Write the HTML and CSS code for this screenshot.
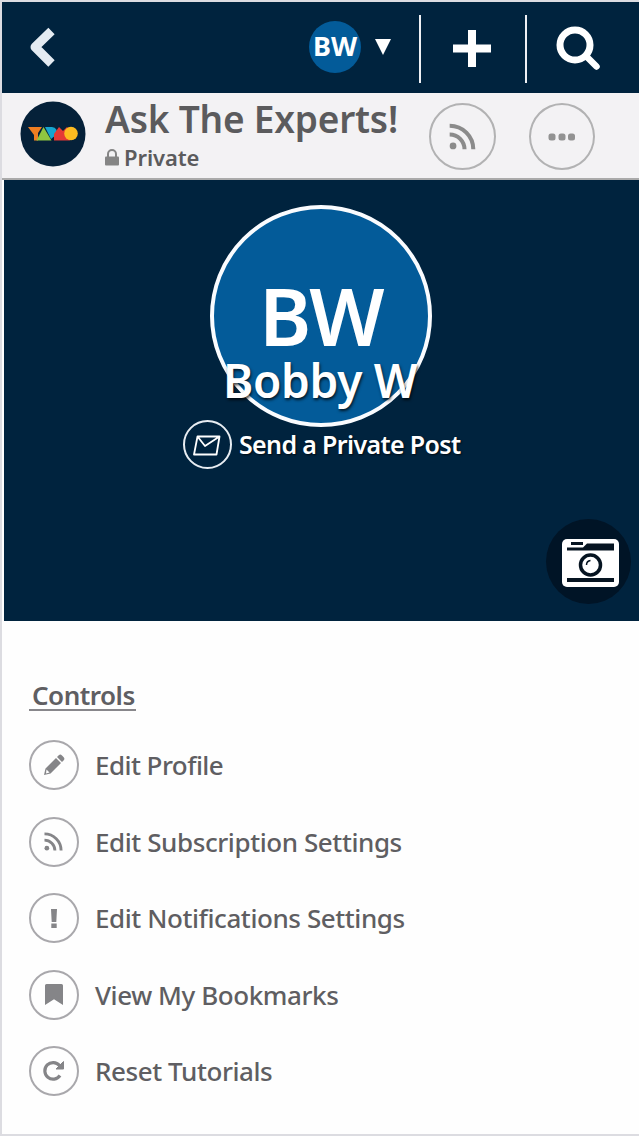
FILE: index.html
```html
<!DOCTYPE html>
<html lang="en">
<head>
<meta charset="utf-8">
<title>Ask The Experts!</title>
<link rel="stylesheet" href="styles.css">
</head>
<body>
<div class="page">
  <header class="topbar">
    <svg class="back" width="30" height="44" viewBox="0 0 30 44"><path d="M23.500 5 7 21l16.500 16.500" fill="none" stroke="#e4ebf2" stroke-width="9" stroke-linejoin="round"/></svg>
    <div class="account">
      <span class="avatar-small"><span>BW</span></span>
      <svg width="16" height="16" viewBox="0 0 16 16"><path d="M0 0h16L8 16z" fill="#fff"/></svg>
    </div>
    <div class="tool tool-add"><svg width="38" height="37" viewBox="0 0 38 37"><path d="M19 0v37M0 18.500h38" stroke="#fff" stroke-width="8"/></svg></div>
    <div class="tool tool-search"><svg width="46" height="46" viewBox="0 0 46 46" fill="none" stroke="#fff"><circle cx="19" cy="19" r="15" stroke-width="7"/><path d="m30 30 10.500 10.500" stroke-width="6.500" stroke-linecap="round"/></svg></div>
  </header>
  <section class="group">
    <svg class="logo" width="66" height="66" viewBox="0 0 66 66"><circle cx="33" cy="33" r="32.500" fill="#052139"/><path d="M8 26h14l-4 6v7.500h-4V34z" fill="#ef7e22"/><path d="M16.500 39.500 23.500 26l8 13.500z" fill="#8fc640"/><path d="M25 26h7a5 5 0 0 1 4 8l-5 4z" fill="#16a5cf"/><path d="M34 39.500V33l5-7 4 4 4-4 3 3v10.500z" fill="#e53935"/><circle cx="51" cy="32.500" r="6.800" fill="#fdbb20"/></svg>
    <div class="group-text">
      <h1>Ask The Experts!</h1>
      <p class="privacy"><svg width="14" height="17" viewBox="0 0 14 17"><path d="M3 8V5a4 4 0 0 1 8 0v3" fill="none" stroke="#858585" stroke-width="2"/><rect y="7.500" width="14" height="9" rx="1" fill="#858585"/></svg><span>Private</span></p>
    </div>
    <div class="round"><svg width="27" height="27" viewBox="0 0 20 20" fill="none" stroke="#8b8b8b" stroke-width="3"><circle cx="3" cy="17" r="2.500" fill="#8b8b8b" stroke="none"/><path d="M.5 8.500A11 11 0 0 1 11.500 19.500M.5 2A17.500 17.500 0 0 1 18 19.500"/></svg></div>
    <div class="round round-more"><svg width="28" height="8" viewBox="0 0 28 8" fill="#929292"><rect x=".5" y=".5" width="7" height="7" rx="2.500"/><rect x="10.500" y=".5" width="7" height="7" rx="2.500"/><rect x="20" y=".5" width="7" height="7" rx="2.500"/></svg></div>
  </section>
  <section class="hero">
    <div class="avatar"><span>BW</span></div>
    <h2>Bobby W</h2>
    <div class="message">
      <span class="mail"><svg width="28" height="22" viewBox="0 0 28 22" fill="none" stroke="#fff" stroke-width="1.800" stroke-linejoin="round"><path d="M4.500 2.500h22l-3 18H1zM4.500 2.500l7.500 9.500 14.500-9.500"/></svg></span>
      <span class="message-label">Send a Private Post</span>
    </div>
    <div class="camera"><svg width="57" height="48" viewBox="0 0 57 48"><rect width="57" height="48" rx="5" fill="#fff"/><path d="M5 8.500h16l4-4h27v7H5zM9 3h12v3H9zM5 39h47v4H5z" fill="#061421"/><circle cx="28.500" cy="26" r="10" fill="#fff" stroke="#061421" stroke-width="3.500"/><path d="M24.500 26q0-4 4-4.500" fill="none" stroke="#061421" stroke-width="1.500"/></svg></div>
  </section>
  <main class="controls">
    <h3>Controls</h3>
    <ul>
      <li><span class="ring"><svg width="22" height="22" viewBox="0 0 22 22"><path d="m1 21 1.500-6.500L13 4l5 5L7.500 19.500zM14 3l2-2q1.500-1 3 .5l1.500 1.500q1.500 1.500.5 3l-2 2z" fill="#858588"/><path d="m3.500 15.500 3 3-3.500 1z" fill="#fff"/></svg></span><span class="label profile">Edit Profile</span></li>
      <li><span class="ring"><svg width="19" height="19" viewBox="0 0 20 20" fill="none" stroke="#858588" stroke-width="3"><circle cx="3" cy="17" r="2.500" fill="#858588" stroke="none"/><path d="M.5 8.500A11 11 0 0 1 11.500 19.500M.5 2A17.500 17.500 0 0 1 18 19.500"/></svg></span><span class="label">Edit Subscription Settings</span></li>
      <li><span class="ring"><svg width="6" height="19" viewBox="0 0 6 19" fill="#858588"><path d="M0 0h6l-.7 13H.7zM.3 14.500h5.400V19H.3z"/></svg></span><span class="label">Edit Notifications Settings</span></li>
      <li><span class="ring"><svg width="18" height="21" viewBox="0 0 18 20" preserveAspectRatio="none" fill="#858588"><path d="M0 1.500Q0 0 1.500 0h15Q18 0 18 1.500V20l-9-5.500L0 20z"/></svg></span><span class="label">View My Bookmarks</span></li>
      <li><span class="ring"><svg width="22" height="22" viewBox="0 0 22 22" fill="none" stroke="#858588"><path d="M17 15.500A8.300 8.300 0 1 1 16.500 5.500" stroke-width="3.200"/><path d="M20.500 1.500v7.500H13z" fill="#858588" stroke-width="1"/></svg></span><span class="label">Reset Tutorials</span></li>
    </ul>
  </main>
</div>
</body>
</html>
```
FILE: styles.css
```css
* { box-sizing: border-box; margin: 0; padding: 0; }
body { font-family: "Noto Sans", sans-serif; background: #fff; }
svg { display: block; flex: none; }
.page { height: 1136px; border: solid #dcdce1; border-width: 2px 0 2px 2px; background: #fefefe; overflow: hidden; white-space: nowrap; }

.topbar { display: flex; align-items: center; height: 91px; background: #00233e; }
.back { margin-left: 26px; }
.account { display: flex; align-items: center; gap: 14px; margin: 0 0 2px 251px; width: 110px; }
.avatar-small { display: flex; align-items: center; justify-content: center; width: 52px; height: 52px; border-radius: 50%; background: #035b99; color: #fff; font-size: 27px; line-height: 48px; padding-bottom: 2px; font-weight: 700; }
.tool { height: 68px; margin-top: 2px; border-left: 2px solid #eef0f4; display: flex; align-items: center; padding-left: 32px; width: 106px; }
.tool-search { padding-left: 29px; }

.group { display: flex; height: 87px; background: #f3f2f4; border-bottom: 2px solid #aaa; }
.logo { margin: 8px 0 0 18px; }
.group-text { width: 325px; padding-left: 19px; color: #5b5b5d; }
h1 { font-size: 37px; line-height: 52px; font-weight: 600; letter-spacing: -.2px; }
.privacy { display: flex; align-items: center; gap: 5px; margin-top: -1px; font-size: 22px; line-height: 26px; font-weight: 600; letter-spacing: -.1px; }
.round { display: flex; align-items: center; justify-content: center; margin: 10px 0 0 18px; width: 67px; height: 67px; border: 2px solid #b2b2b3; border-radius: 50%; }
.round-more { margin-left: 33px; width: 66px; }

.hero { position: relative; height: 441px; margin-left: 2px; padding-top: 25px; background: #00233e; color: #fff; }
.avatar { display: flex; justify-content: center; width: 222px; height: 222px; margin-left: 206px; border: 4px solid #fafcff; border-radius: 50%; background: #035b99; font-size: 79px; line-height: 214px; font-weight: 600; letter-spacing: -2px; }
h2 { position: absolute; left: 219px; top: 170px; font-size: 46px; line-height: 60px; font-weight: 600; letter-spacing: -.3px; text-shadow: 1px 2px 3px #000b; }
.message { display: flex; align-items: center; gap: 7px; margin: -7px 0 0 179px; font-size: 25px; line-height: 46px; font-weight: 600; text-shadow: 1px 1px 2px #000b; }
.message-label { padding-bottom: 2px; letter-spacing: -.65px; }
.mail { display: flex; align-items: center; justify-content: center; width: 49px; height: 49px; border: 2px solid #e8edf2; border-radius: 50%; padding-right: 2px; }
.camera { position: absolute; left: 542px; top: 339px; width: 85px; height: 85px; border-radius: 50%; background: #001426; display: flex; align-items: center; justify-content: center; padding: 2px 0 0 3px; }

.controls { padding: 58px 0 0 27px; color: #5f5e62; }
h3 { width: 107px; height: 32px; padding-left: 3px; border-bottom: 2px solid #88878b; font-size: 26px; line-height: 32px; font-weight: 600; letter-spacing: -.5px; }
ul { list-style: none; margin-top: 29px; display: grid; gap: 26.500px; }
li { display: flex; align-items: center; gap: 16px; height: 50px; }
.ring { display: flex; align-items: center; justify-content: center; width: 50px; height: 50px; padding-right: 1px; border: 2px solid #a9a8ac; border-radius: 50%; }
.label { font-size: 26px; line-height: 32px; font-weight: 500; letter-spacing: -.42px; }
.profile { letter-spacing: -.55px; }
```
